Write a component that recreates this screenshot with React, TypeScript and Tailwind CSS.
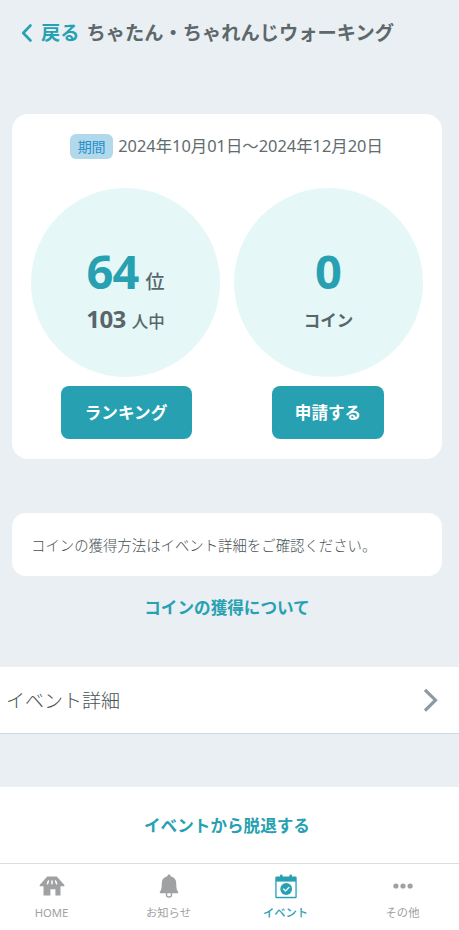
import { ReactNode } from "react";

function HomeIcon() {
  return (
    <svg width="26" height="20" viewBox="0 0 26 20" fill="#a0a1a2">
      <path d="M8.200.5h9.600l7.400 8.200c.6.9.2 1.600-.9 1.600h-2.800v9.300h-5.100v-6.400h-5v6.400H4.500v-9.300H1.800c-1.100 0-1.500-.7-.9-1.600z" />
      <path d="M9.400 5 8.500 7.800M13 5v2.800M16.600 5l1 2.800" stroke="#fff" strokeWidth="1.500" strokeLinecap="round" />
    </svg>
  );
}

function BellIcon() {
  return (
    <svg width="20" height="24" viewBox="0 0 20 24" fill="#a0a1a2">
      <circle cx="10" cy="20.400" r="2.600" fill="none" stroke="#a0a1a2" strokeWidth="1.300" />
      <path d="M10 .5c1 0 1.600.7 1.600 1.700 3.600.8 5.500 3.100 5.600 6.500.1 4.500.2 7.200 1.700 8.700.7.8.4 1.800-.5 1.800H1.600c-.9 0-1.200-1-.5-1.800 1.500-1.500 1.600-4.200 1.700-8.700C2.900 5.300 4.800 3 8.400 2.200 8.400 1.200 9 .5 10 .5z" />
    </svg>
  );
}

function EventIcon() {
  return (
    <svg width="22" height="25" viewBox="0 0 22 25" fill="#27a1b1">
      <path d="M5 2.500V1.700a1.300 1.300 0 0 1 2.600 0v.8h6.800v-.8a1.300 1.300 0 0 1 2.600 0v.8h3.500a1.200 1.200 0 0 1 1.200 1.200v19.300a1.200 1.200 0 0 1-1.200 1.200h-19a1.200 1.200 0 0 1-1.200-1.200V3.700a1.200 1.200 0 0 1 1.200-1.200z" />
      <path d="M1.600 7.600h18.800v15.200H1.600z" fill="#fff" />
      <circle cx="11.200" cy="15" r="5.900" />
      <path d="m8.600 15 1.900 1.900 3.400-3.500" fill="none" stroke="#e5f7f8" strokeWidth="1.400" strokeLinecap="round" strokeLinejoin="round" />
    </svg>
  );
}

function DotsIcon() {
  return (
    <svg width="20" height="6" viewBox="0 0 20 6" fill="#a0a1a2">
      <circle cx="2.900" cy="3" r="2.600" />
      <circle cx="10" cy="3" r="2.600" />
      <circle cx="17.100" cy="3" r="2.600" />
    </svg>
  );
}

function Circle({ children }: { children: ReactNode }) {
  return (
    <div className="flex h-[189px] w-[189px] flex-col items-center rounded-full bg-[#e5f7f7] pt-[53px] font-bold text-[#58666a]">
      {children}
    </div>
  );
}

function Tab({ icon, label, active }: { icon: ReactNode; label: string; active?: boolean }) {
  return (
    <button className="flex w-[117px] shrink-0 flex-col items-center pt-[9px]">
      <span className="flex h-[26px] items-center">{icon}</span>
      <span
        className={
          active
            ? "mt-[6px] whitespace-nowrap text-[11.300px] font-medium leading-4 text-[#27a1b1]"
            : "mt-[6px] whitespace-nowrap text-[11.300px] leading-4 text-[#a0a1a2]"
        }
      >
        {label}
      </span>
    </button>
  );
}

export default function App() {
  return (
    <div className="flex h-[930px] w-[459px] flex-col overflow-hidden bg-[#e9eff3] font-['Noto_Sans','Noto_Sans_CJK_JP',sans-serif] text-[#626b6e]">
      <header className="flex h-[66px] shrink-0 items-center pl-5 text-[19.250px] font-bold">
        <button className="flex items-center text-[#27a1b1]">
          <svg width="13" height="20" viewBox="0 0 13 20" fill="none" stroke="#27a1b1" strokeWidth="2.600" strokeLinecap="round" strokeLinejoin="round">
            <path d="M10.500 2.500 3.200 10l7.300 7.500" />
          </svg>
          <span className="ml-2">戻る</span>
        </button>
        <h1 className="ml-[7px] whitespace-nowrap text-[#5d686b]">ちゃたん・ちゃれんじウォーキング</h1>
      </header>

      <section className="ml-3 mt-12 h-[345px] w-[430px] shrink-0 rounded-[16px] bg-white pt-[19px]">
        <div className="flex h-[26px] items-center justify-center whitespace-nowrap pr-px">
          <span className="flex h-[25px] w-[43px] items-center justify-center rounded-[6px] bg-[#b1d8eb] text-[14px] text-[#278fca]">
            期間
          </span>
          <span className="ml-[5px] pt-px text-[16.400px]">2024年10月01日〜2024年12月20日</span>
        </div>
        <div className="mt-[29px] flex justify-center gap-[14px]">
          <Circle>
            <div className="flex h-[60px] items-baseline whitespace-nowrap leading-[60px]">
              <span className="text-[47px] tracking-[-1px] text-[#27a1b1]">64</span>
              <span className="ml-[7px] text-[19px] font-medium">位</span>
            </div>
            <div className="flex h-[36px] items-baseline whitespace-nowrap leading-[36px]">
              <span className="text-[24px] tracking-[-0.500px]">103</span>
              <span className="ml-[6px] text-[16.500px] font-medium">人中</span>
            </div>
          </Circle>
          <Circle>
            <div className="h-[60px] text-[47px] leading-[60px] text-[#27a1b1]">0</div>
            <div className="text-[16.500px] leading-[40px]">コイン</div>
          </Circle>
        </div>
        <div className="mt-[9px] flex justify-center gap-[13px] text-[16.600px] font-bold text-white">
          <div className="flex w-[189px] justify-center">
            <button className="h-[53px] w-[131px] rounded-[8px] bg-[#27a1b1] pt-px">ランキング</button>
          </div>
          <div className="flex w-[189px] justify-center">
            <button className="h-[53px] w-[112px] rounded-[8px] bg-[#27a1b1] pt-px">申請する</button>
          </div>
        </div>
      </section>

      <p className="ml-3 mt-[54px] flex h-[63px] w-[430px] shrink-0 items-center whitespace-nowrap rounded-[14px] bg-white pl-[19px] pt-[3px] text-[14.400px] font-light text-[#485154]">
        コインの獲得方法はイベント詳細をご確認ください。
      </p>
      <a className="mr-[5px] mt-[20px] block h-6 shrink-0 text-center text-[16.600px] font-bold leading-6 text-[#27a1b1]">
        コインの獲得について
      </a>

      <button className="mt-[47px] flex h-[67px] shrink-0 items-center justify-between border-b border-[#cddadd] bg-white pl-[6px] pr-[20px] text-[19px] font-light text-[#485154]">
        <span className="pt-0.5">イベント詳細</span>
        <svg width="17" height="24" viewBox="0 0 17 24" fill="none" stroke="#8b9a9f" strokeWidth="3.200">
          <path d="m3 1.800 10.500 10.400L3 22.600" />
        </svg>
      </button>

      <div className="mt-[53px] flex h-[76px] shrink-0 items-center justify-center bg-white pr-[5px] pt-0.5 text-[16.600px] font-bold text-[#27a1b1]">
        イベントから脱退する
      </div>
      <nav className="flex grow border-t border-[#dcdddd] bg-white">
        <div className="-ml-[7px] flex">
          <Tab icon={<HomeIcon />} label="HOME" />
          <Tab icon={<BellIcon />} label="お知らせ" />
          <Tab icon={<EventIcon />} label="イベント" active />
          <Tab icon={<DotsIcon />} label="その他" />
        </div>
      </nav>
    </div>
  );
}
